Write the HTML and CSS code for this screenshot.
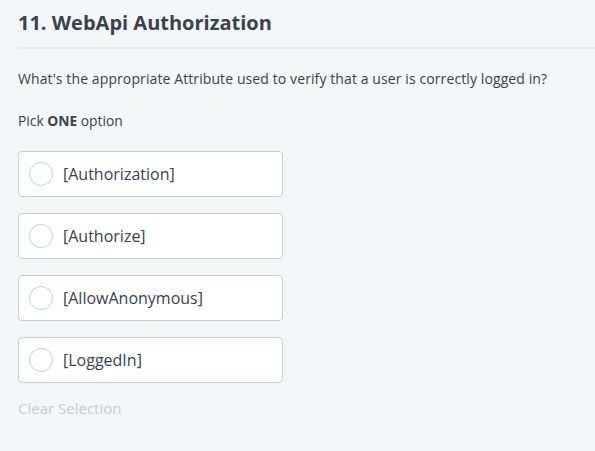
FILE: index.html
```html
<!DOCTYPE html>
<html>
<head>
<meta charset="utf-8">
<link rel="stylesheet" href="styles.css">
</head>
<body>
<div class="page">
  <h1 class="title">11. WebApi Authorization</h1>
  <p class="question">What's the appropriate Attribute used to verify that a user is correctly logged in?</p>
  <p class="hint">Pick <strong>ONE</strong> option</p>
  <div class="options">
    <label class="option"><span class="radio"></span><span class="label">[Authorization]</span></label>
    <label class="option"><span class="radio"></span><span class="label">[Authorize]</span></label>
    <label class="option"><span class="radio"></span><span class="label">[AllowAnonymous]</span></label>
    <label class="option"><span class="radio"></span><span class="label">[LoggedIn]</span></label>
  </div>
  <div class="clear">Clear Selection</div>
</div>
</body>
</html>
```
FILE: styles.css
```css
html, body {
  margin: 0;
  padding: 0;
  background: #f3f7f8;
}
body {
  font-family: "Open Sans", "Liberation Sans", sans-serif;
  color: #39424e;
  width: 595px;
  height: 451px;
  overflow: hidden;
}
.page {
  padding: 9px 0 0 18px;
}
.title {
  margin: 0;
  font-size: 20px;
  line-height: 27px;
  font-weight: 700;
  color: #39424e;
  padding-bottom: 11px;
  border-bottom: 2px solid #e6ecee;
}
.question {
  margin: 20px 0 0;
  font-size: 14px;
  line-height: 20px;
  letter-spacing: 0.1px;
}
.hint {
  margin: 22px 0 0;
  font-size: 13.8px;
  line-height: 19px;
}
.hint strong {
  font-weight: 700;
}
.options {
  margin-top: 21px;
  display: flex;
  flex-direction: column;
  gap: 16px;
  width: 265px;
}
.option {
  box-sizing: border-box;
  height: 46px;
  display: flex;
  align-items: center;
  gap: 10px;
  padding-left: 10px;
  background: #fff;
  border: 1px solid #c2cfd3;
  border-radius: 4px;
}
.radio {
  box-sizing: border-box;
  width: 24px;
  height: 24px;
  border-radius: 50%;
  border: 1px solid #c2cfd3;
  background: #fff;
  flex: none;
}
.label {
  font-size: 16px;
  line-height: 22px;
  color: #39424e;
}
.clear {
  margin-top: 15px;
  font-size: 15px;
  line-height: 21px;
  color: #c3ced2;
}
```
